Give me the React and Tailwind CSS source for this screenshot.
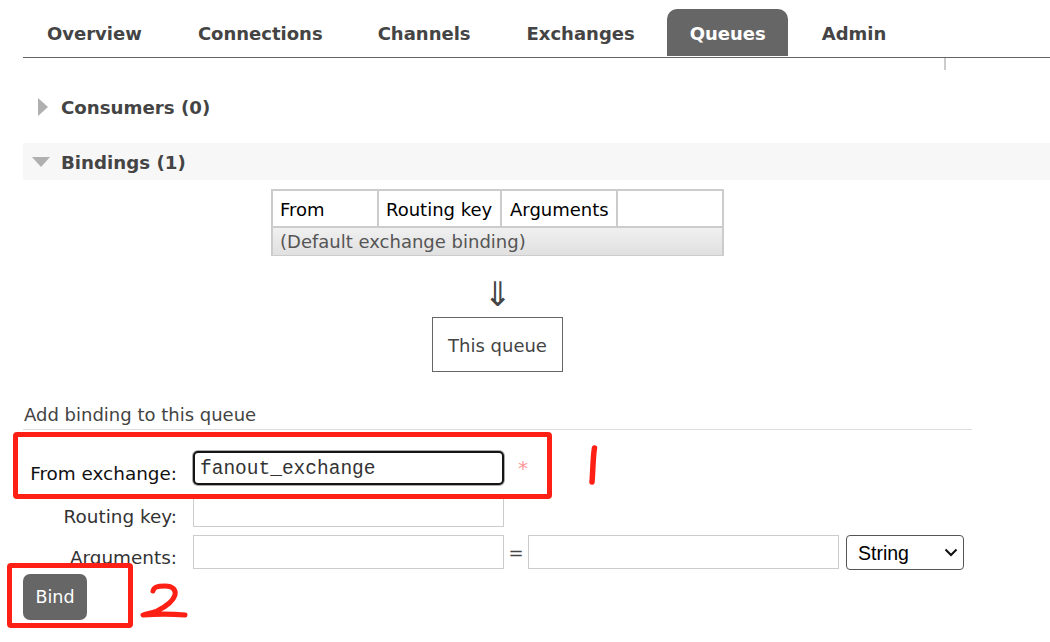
const font = "[font-family:'DejaVu_Sans',Verdana,sans-serif]";

function Tab({ label, active, className }) {
  return (
    <div
      className={
        "h-[47px] pl-[23px] pt-[13px] text-[18px] leading-[24px] font-bold rounded-t-[10px] " +
        (active ? "bg-[#666666] text-white " : "text-[#444444] ") +
        className
      }
    >
      {label}
    </div>
  );
}

function FormRow({ label, className, labelClass, children }) {
  return (
    <div className={"flex items-center " + className}>
      <label className={"w-[154px] text-right text-[18.4px] leading-[22px] shrink-0 " + labelClass}>{label}</label>
      <div className="ml-[16px] flex items-center">{children}</div>
    </div>
  );
}

function TextInput({ className }) {
  return <input type="text" className={"border border-[#cccccc] bg-white outline-none " + className} />;
}

export default function App() {
  return (
    <div className={"relative w-[1050px] h-[642px] overflow-hidden bg-white pl-[23px] " + font}>
      <div className="flex pt-[9px] pl-[1px] border-b border-[#666666] h-[58px]">
        <Tab label="Overview" className="pr-[23px] mr-[10px]" />
        <Tab label="Connections" className="pr-[23px] mr-[9px]" />
        <Tab label="Channels" className="pr-[23px] mr-[10px]" />
        <Tab label="Exchanges" className="pr-[23px] mr-[9px]" />
        <Tab label="Queues" active className="pr-[22px] mr-[11px]" />
        <Tab label="Admin" className="pr-[23px]" />
      </div>
      <div className="ml-[921px] w-[2px] h-[12px] bg-[#cccccc]" />

      <div className="flex items-center h-[37px] mt-[18px]">
        <svg width="10" height="18" viewBox="0 0 10 18" className="ml-[15px]">
          <path d="M0 0 L10 9 L0 18 Z" fill="#b0b0b0" />
        </svg>
        <h2 className="ml-[13px] pt-[2px] text-[18.2px] font-bold leading-[24px] text-[#444444]">Consumers (0)</h2>
      </div>

      <div className="flex items-center h-[37px] mt-[18px] bg-[#f7f7f7]">
        <svg width="18" height="10" viewBox="0 0 18 10" className="ml-[9px]">
          <path d="M0 0 L18 0 L9 10 Z" fill="#b0b0b0" />
        </svg>
        <h2 className="ml-[11px] pt-[2px] text-[18.2px] font-bold leading-[24px] text-[#444444]">Bindings (1)</h2>
      </div>

      <div className="ml-[248px] mt-[9px] w-[453px] border-2 border-[#cccccc] border-b-1">
        <div className="flex h-[35px] text-[18px] leading-[38px] text-black">
          <div className="w-[106px] pl-[7px] border-r-2 border-[#cccccc]">From</div>
          <div className="w-[123px] pl-[7px] border-r-2 border-[#cccccc]">Routing key</div>
          <div className="w-[116px] pl-[8px] border-r-2 border-[#cccccc]">Arguments</div>
        </div>
        <div className="h-[29px] pl-[7px] border-t-2 border-[#cccccc] bg-gradient-to-b from-[#f0f0f0] to-[#e0e0e0] text-[18px] leading-[27px] text-[#555555]">
          (Default exchange binding)
        </div>
      </div>

      <div className="ml-[409px] w-[131px] mt-[18px] h-[43px] text-center text-[34px] leading-[40px] text-[#444444]">⇓</div>
      <div className="ml-[409px] w-[131px] h-[55px] border border-[#666666] text-center text-[18px] leading-[55px] text-[#444444]">
        This queue
      </div>

      <div className="mt-[32px] mr-[78px] pl-[1px] border-b border-[#dddddd] h-[26px] text-[18px] leading-[22px] text-[#444444]">
        Add binding to this queue
      </div>

      <FormRow label="From exchange:" className="mt-[21px] h-[34px]" labelClass="pt-[12px] text-[#111111]">
        <input
          type="text"
          readOnly
          value="fanout_exchange"
          className="w-[311px] h-[34px] pl-[5px] pt-[2px] rounded-[5px] border-2 border-[#151515] ring-1 ring-[#aaaaaa] bg-white outline-none font-['Liberation_Mono',monospace] text-[19.5px] text-[#333333]"
        />
        <span className="ml-[14px] text-[20px] leading-[33px] text-[#ff9999]">*</span>
      </FormRow>

      <FormRow label="Routing key:" className="mt-[13px] h-[29px]" labelClass="pt-[8px] text-[#333333]">
        <TextInput className="w-[311px] h-[29px]" />
      </FormRow>

      <FormRow label="Arguments:" className="mt-[8px] h-[35px]" labelClass="pt-[10px] text-[#333333]">
        <TextInput className="w-[311px] h-[34px] -mt-[1px]" />
        <span className="w-[24px] text-center text-[18px] text-[#444444]">=</span>
        <TextInput className="w-[311px] h-[34px] -mt-[1px]" />
        <div className="relative ml-[7px]">
          <select className="block appearance-none w-[118px] h-[35px] pl-[11px] pt-[2px] rounded-[4px] border border-[#555555] bg-white text-[19.5px] text-black font-['Liberation_Sans',sans-serif]">
            <option>String</option>
          </select>
          <svg className="absolute right-[6px] top-[13px]" width="14" height="9" viewBox="0 0 14 9" fill="none">
            <path d="M1.5 1.5 L7 7 L12.5 1.5" stroke="#111111" strokeWidth="2" />
          </svg>
        </div>
      </FormRow>

      <button className="block mt-[4px] w-[64px] h-[46px] rounded-[7px] bg-[#666666] text-white text-[17.5px]">Bind</button>

      {/* annotations painted on the screenshot */}
      <div className="absolute left-[13px] top-[432px] w-[539px] h-[67px] border-[5px] border-[#ff2015] rounded-[4px]" />
      <div className="absolute left-[7px] top-[563px] w-[126px] h-[65px] border-[5px] border-[#ff2015] rounded-[4px]" />
      <svg className="absolute left-[585px] top-[440px]" width="20" height="50" viewBox="0 0 20 50" fill="none">
        <path d="M9.5 8 C8 16 8 30 7 42" stroke="#ff2015" strokeWidth="5.5" strokeLinecap="round" />
      </svg>
      <svg className="absolute left-[135px] top-[578px]" width="56" height="44" viewBox="0 0 56 44" fill="none">
        <path d="M18 13 C19 9 22 8 30 8 C38 8 41 12 40 17 C38 24 30 29 22 33 C16 35 11 36 8 37 C20 36 38 36 50 37" stroke="#ff2015" strokeWidth="5" strokeLinecap="round" strokeLinejoin="round" />
      </svg>
    </div>
  );
}
